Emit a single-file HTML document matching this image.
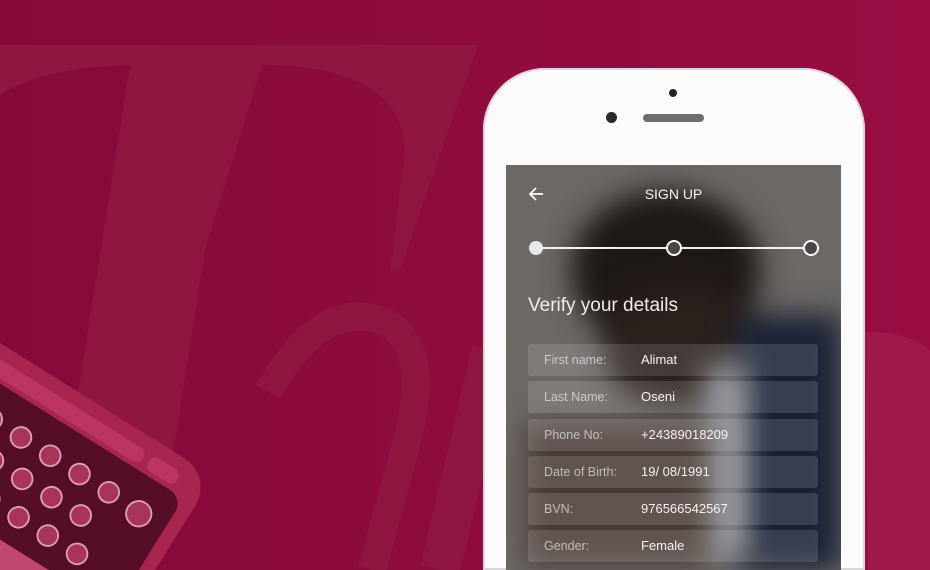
<!DOCTYPE html>
<html><head><meta charset="utf-8"><style>
*{margin:0;padding:0;box-sizing:border-box}
html,body{width:930px;height:570px;overflow:hidden}
body{background:#8a0b3b;font-family:"Liberation Sans",sans-serif}
#wrap{position:relative;width:930px;height:570px;overflow:hidden}
.bg{position:absolute;left:0;top:0;overflow:hidden}
.phone{position:absolute;left:483px;top:68px;width:382px;height:502px;background:#fbfbfb;border-radius:62px 62px 0 0;box-shadow:0 0 0 2px #d8d8d8 inset}
.cam{position:absolute;left:669px;top:89px;width:8px;height:8px;border-radius:50%;background:#222}
.cam2{position:absolute;left:606px;top:112px;width:11px;height:11px;border-radius:50%;background:#2a2a2a}
.spk{position:absolute;left:643px;top:114px;width:61px;height:8px;border-radius:4px;background:#6d6d6d}
.screen{position:absolute;left:506px;top:165px;width:335px;height:405px;background:#6b6866;overflow:hidden}
.blob{position:absolute;filter:blur(14px)}
.ui{position:absolute;left:0;top:0;width:335px;height:405px;color:#fff}
.title{position:absolute;left:0;width:335px;top:21px;text-align:center;font-size:14px;color:#f2f2f2}
.h{position:absolute;left:22px;top:130px;font-size:19px;color:#eee}
.row{position:absolute;left:22px;width:290px;height:32px;background:rgba(255,255,255,.13);border-radius:3px;font-size:12.5px}
.row .l{position:absolute;left:16px;top:9px;color:rgba(255,255,255,.6)}
.row .v{position:absolute;left:113px;top:8px;color:#f4f4f4;font-size:13px}
</style></head><body><div id="wrap">
<svg class="bg" width="930" height="570">
<defs><linearGradient id="g" x1="0" x2="1"><stop offset="0" stop-color="#860a39"/><stop offset="1" stop-color="#980c42"/></linearGradient></defs>
<rect width="930" height="570" fill="url(#g)"/>
<path d="M0 45 H478 L400 270 L390 272 L405 150 Q400 65 262 65 L205 250 L155 570 L50 570 L130 65 Q40 68 0 95 Z" fill="#8e1640"/>
<path d="M268 392 Q320 300 380 320 Q430 340 410 430 L372 570" stroke="#8e1640" stroke-width="28" fill="none"/>
<path d="M492 350 L440 570" stroke="#8f1542" stroke-width="40" fill="none"/>
<path d="M865 332 Q905 330 930 350 L930 570 L868 570 Z" fill="#a0184a"/>
<g transform="translate(-40,318) rotate(32) scale(1.15)">
<rect x="0" y="0" width="260" height="210" rx="30" fill="#a8254f"/>
<rect x="12" y="30" width="236" height="180" rx="14" fill="#560d28"/>
<rect x="20" y="12" width="180" height="14" rx="7" fill="#bb3560"/>
<rect x="205" y="12" width="30" height="14" rx="7" fill="#bb3560"/>
<g fill="#a8345a" stroke="#dca0b3" stroke-width="1.6">
<circle cx="40" cy="60" r="9"/><circle cx="70" cy="60" r="9"/><circle cx="100" cy="60" r="9"/><circle cx="130" cy="60" r="9"/><circle cx="160" cy="60" r="9"/><circle cx="190" cy="60" r="9"/><circle cx="222" cy="62" r="11"/>
<circle cx="30" cy="90" r="9"/><circle cx="60" cy="90" r="9"/><circle cx="90" cy="90" r="9"/><circle cx="120" cy="90" r="9"/><circle cx="150" cy="90" r="9"/><circle cx="180" cy="90" r="9"/>
<circle cx="45" cy="120" r="9"/><circle cx="75" cy="120" r="9"/><circle cx="105" cy="120" r="9"/><circle cx="135" cy="120" r="9"/><circle cx="165" cy="120" r="9"/><circle cx="195" cy="120" r="9"/>
</g>
<rect x="-10" y="145" width="270" height="28" fill="#c04a6f"/>
</g>
</svg>
<div class="phone"></div>
<div class="cam"></div><div class="cam2"></div><div class="spk"></div>
<div class="screen">
<div class="blob" style="left:65px;top:25px;width:190px;height:160px;border-radius:50%;background:#1e1816"></div>
<div class="blob" style="left:100px;top:120px;width:150px;height:120px;border-radius:40%;background:#2a201c"></div>
<div class="blob" style="left:230px;top:150px;width:105px;height:255px;background:#1a2236"></div>
<div class="blob" style="left:200px;top:200px;width:40px;height:190px;background:#8a8c92"></div>
<div class="blob" style="left:20px;top:260px;width:180px;height:140px;background:#4a3a34"></div>
<div class="ui">
<svg style="position:absolute;left:22px;top:21px" width="16" height="16" viewBox="0 0 16 16"><path d="M15 8H2M8 2L2 8L8 14" stroke="#fff" stroke-width="1.8" fill="none"/></svg>
<div class="title">SIGN UP</div>
<svg style="position:absolute;left:0;top:70px" width="335" height="26"><line x1="30" y1="13" x2="305" y2="13" stroke="#f2f2f2" stroke-width="2"/><circle cx="30" cy="13" r="7" fill="#e8e8e8"/><circle cx="168" cy="13" r="7" fill="#4a4543" stroke="#fff" stroke-width="2"/><circle cx="305" cy="13" r="7" fill="#4a4543" stroke="#fff" stroke-width="2"/></svg>
<div class="h">Verify your details</div>
<div class="row" style="top:179px"><span class="l">First name:</span><span class="v">Alimat</span></div>
<div class="row" style="top:216px"><span class="l">Last Name:</span><span class="v">Oseni</span></div>
<div class="row" style="top:254px"><span class="l">Phone No:</span><span class="v">+24389018209</span></div>
<div class="row" style="top:291px"><span class="l">Date of Birth:</span><span class="v">19/ 08/1991</span></div>
<div class="row" style="top:328px"><span class="l">BVN:</span><span class="v">976566542567</span></div>
<div class="row" style="top:365px"><span class="l">Gender:</span><span class="v">Female</span></div>
</div>
</div>
</div></body></html>
